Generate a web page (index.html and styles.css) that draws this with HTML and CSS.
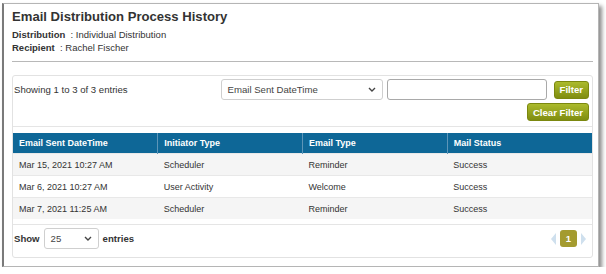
FILE: index.html
```html
<!DOCTYPE html>
<html lang="en">
<head>
    <meta charset="UTF-8">
    <title>Email Distribution Process History</title>
    <link rel="stylesheet" href="styles.css">
</head>
<body>
    <div class="dialog">
        <h1 class="title">Email Distribution Process History</h1>
        <div class="meta first"><b>Distribution</b> &nbsp;: Individual Distribution</div>
        <div class="meta"><b>Recipient</b> &nbsp;: Rachel Fischer</div>
        <div class="divider"></div>

        <div class="panel">
            <div class="toolbar">
                <div class="count">Showing 1 to 3 of 3 entries</div>
                <div class="filters">
                    <div class="filter-row">
                        <div class="select wide">
                            <span>Email Sent DateTime</span>
                            <svg width="8" height="5" viewBox="0 0 8 5"><path d="M1 1l3 3 3-3" fill="none" stroke="#444" stroke-width="1.4"/></svg>
                        </div>
                        <input type="text" class="search">
                        <button class="btn">Filter</button>
                    </div>
                    <button class="btn">Clear Filter</button>
                </div>
            </div>

            <table class="grid">
                <thead>
                    <tr>
                        <th>Email Sent DateTime</th>
                        <th>Initiator Type</th>
                        <th>Email Type</th>
                        <th>Mail Status</th>
                    </tr>
                </thead>
                <tbody>
                    <tr>
                        <td>Mar 15, 2021 10:27 AM</td>
                        <td>Scheduler</td>
                        <td>Reminder</td>
                        <td>Success</td>
                    </tr>
                    <tr>
                        <td>Mar 6, 2021 10:27 AM</td>
                        <td>User Activity</td>
                        <td>Welcome</td>
                        <td>Success</td>
                    </tr>
                    <tr>
                        <td>Mar 7, 2021 11:25 AM</td>
                        <td>Scheduler</td>
                        <td>Reminder</td>
                        <td>Success</td>
                    </tr>
                </tbody>
            </table>

            <div class="footer">
                <div class="length">
                    <b>Show</b>
                    <div class="select small">
                        <span>25</span>
                        <svg width="8" height="5" viewBox="0 0 8 5"><path d="M1 1l3 3 3-3" fill="none" stroke="#444" stroke-width="1.4"/></svg>
                    </div>
                    <b>entries</b>
                </div>
                <div class="pager">
                    <span class="arrow prev"></span>
                    <span class="page current">1</span>
                    <span class="arrow next"></span>
                </div>
            </div>
        </div>
    </div>
</body>
</html>
```

FILE: styles.css
```css
body {
    margin: 0;
    font-family: "Liberation Sans", Arial, sans-serif;
    color: #333;
    background: #fff;
}

.dialog {
    margin: 3px 0 0 2px;
    width: 597px;
    height: 264px;
    box-sizing: border-box;
    border: 1px solid #b5b5b5;
    border-left: 2px solid #7a7a7a;
    box-shadow: 3px 3px 4px rgba(0,0,0,0.45);
    padding: 5px 5px 0 8px;
}

.title {
    margin: 0;
    font-size: 13.1px;
    line-height: 16px;
    font-weight: bold;
    color: #333;
}

.meta {
    font-size: 9.5px;
    line-height: 12.5px;
    color: #333;
}

.meta.first {
    margin-top: 4px;
}

.divider {
    margin: 7px 0 13px;
    border-top: 1px solid #b8b8b8;
}

.panel {
    border: 1px solid #e2e2e2;
    border-radius: 3px;
    height: 183px;
    box-sizing: border-box;
    font-size: 9.6px;
}

.toolbar {
    display: flex;
    justify-content: space-between;
    align-items: flex-start;
    padding: 3px 3px 5px 1px;
    border-bottom: 1px solid #e5e5e5;
}

.count {
    line-height: 21px;
}

.filters {
    display: flex;
    flex-direction: column;
    align-items: flex-end;
    gap: 3px;
}

.filter-row {
    display: flex;
    align-items: center;
    gap: 4px;
}

.filter-row .btn {
    margin-left: 3px;
}

.select {
    display: flex;
    align-items: center;
    justify-content: space-between;
    height: 21px;
    box-sizing: border-box;
    border: 1px solid #cfcfcf;
    border-radius: 3px;
    padding: 0 6px 0 6px;
    background: #fff;
    color: #444;
}

.select.wide {
    width: 162px;
}

.select.small {
    width: 55px;
}

.search {
    width: 160px;
    height: 21px;
    box-sizing: border-box;
    border: 1px solid #a9a9a9;
    border-radius: 3px;
    margin: 0;
}

.btn {
    height: 18px;
    padding: 0 5px;
    border: 1px solid #7b880f;
    border-radius: 3px;
    background: linear-gradient(#abba2c, #7f8d10);
    color: #fff;
    font-family: "Liberation Sans", Arial, sans-serif;
    font-size: 9.6px;
    font-weight: bold;
}

.grid {
    width: 100%;
    margin-top: 6px;
    border-collapse: collapse;
    table-layout: fixed;
    font-size: 9px;
}

.grid th {
    height: 20px;
    padding: 0 6px;
    background: #0e6797;
    color: #fff;
    text-align: left;
    font-weight: bold;
}

.grid th + th {
    border-left: 1px solid #5d95b8;
}

.grid td {
    height: 21px;
    padding: 0 6px;
    border-top: 1px solid #e8e8e8;
    color: #333;
}

.grid tbody tr:nth-child(odd) {
    background: #f5f5f5;
}

.footer {
    display: flex;
    justify-content: space-between;
    align-items: center;
    margin-top: 5px;
    padding: 3px 6px 0 1px;
    border-top: 1px solid #e5e5e5;
}

.length {
    display: flex;
    align-items: center;
    gap: 4px;
}

.pager {
    display: flex;
    align-items: center;
    gap: 4px;
}

.arrow {
    width: 0;
    height: 0;
    border-top: 6px solid transparent;
    border-bottom: 6px solid transparent;
}

.arrow.prev {
    border-right: 5px solid #cfe0ee;
}

.arrow.next {
    border-left: 5px solid #cfe0ee;
}

.page {
    width: 17px;
    height: 17px;
    line-height: 17px;
    text-align: center;
    border-radius: 3px;
    background: #a49b2f;
    color: #fff;
    font-weight: bold;
    font-size: 9.5px;
}
```
